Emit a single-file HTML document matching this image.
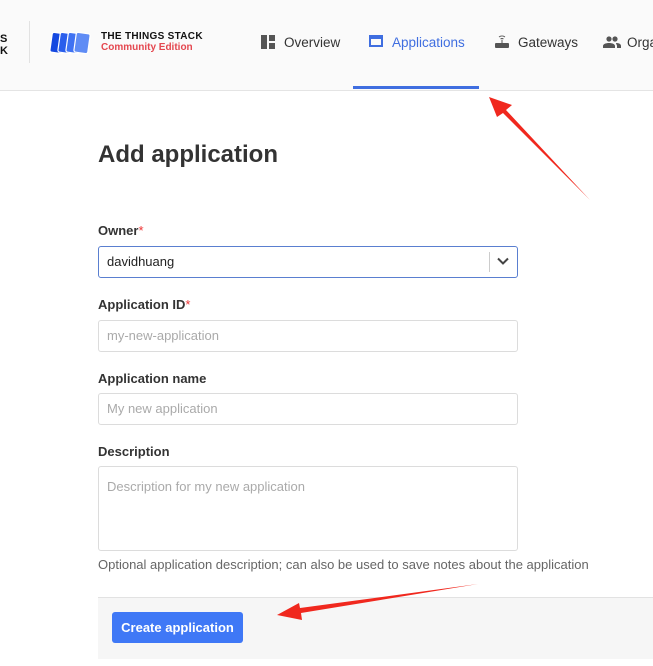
<!DOCTYPE html>
<html><head><meta charset="utf-8"><style>
body{margin:0;width:653px;height:666px;overflow:hidden;background:#fff;font-family:"Liberation Sans",sans-serif;position:relative;color:#222}
.a{position:absolute}
.hdr{left:0;top:0;width:653px;height:90px;background:#fafafa;border-bottom:1px solid #e4e4e4}
.nav{font-size:13.5px;color:#333;top:35px}
label{position:absolute;font-size:13px;font-weight:bold;color:#333}
.req{color:#e33;font-weight:normal}
.in{position:absolute;left:98px;width:420px;border:1px solid #dcdcdc;border-radius:3px;background:#fff;font-size:13px;color:#aaa;box-sizing:border-box;padding-left:8px}
</style></head><body>
<div class="a hdr"></div>
<div class="a" style="left:0;top:33px;font-weight:bold;font-size:11px;line-height:12px;color:#111">S<br>K</div>
<div class="a" style="left:29px;top:21px;width:1px;height:42px;background:#e2e2e2"></div>
<svg class="a" style="left:47px;top:30px" width="48" height="27">
<g stroke="#fff" stroke-width="1.2">
<rect x="4" y="3" width="14" height="20" rx="2" fill="#1448e0" transform="rotate(8 11 13)"/>
<rect x="12" y="3" width="14" height="20" rx="2" fill="#2a5eec" transform="rotate(8 19 13)"/>
<rect x="20" y="3" width="14" height="20" rx="2" fill="#3f72f2" transform="rotate(8 27 13)"/>
<rect x="28" y="3" width="14" height="20" rx="2" fill="#5f8cf5" transform="rotate(8 35 13)"/>
</g>
</svg>
<div class="a" style="left:101px;top:31px;font-size:10px;font-weight:bold;color:#111;letter-spacing:.3px">THE THINGS STACK</div>
<div class="a" style="left:101px;top:42px;font-size:10px;color:#e4474f;font-weight:bold">Community Edition</div>
<svg class="a" style="left:261px;top:35px" width="14" height="14"><rect x="0" y="0" width="6" height="14" fill="#555"/><rect x="8" y="0" width="6" height="6" fill="#555"/><rect x="8" y="8" width="6" height="6" fill="#555"/></svg>
<div class="a nav" style="left:284px">Overview</div>
<svg class="a" style="left:369px;top:35px" width="15" height="13"><rect x="1" y="1" width="12" height="10" fill="none" stroke="#3f6ee0" stroke-width="2"/><rect x="1" y="1" width="12" height="3" fill="#3f6ee0"/></svg>
<div class="a nav" style="left:392px;color:#3f6ee0">Applications</div>
<div class="a" style="left:353px;top:86px;width:126px;height:3px;background:#3f6ee0"></div>
<svg class="a" style="left:495px;top:34px" width="14" height="15"><path d="M4 3a5 5 0 0 1 6 0M5.5 5a3 3 0 0 1 3 0" stroke="#555" fill="none"/><rect x="6.5" y="6" width="1" height="3" fill="#555"/><rect x="0" y="9" width="14" height="5" rx="1" fill="#555"/></svg>
<div class="a nav" style="left:518px">Gateways</div>
<svg class="a" style="left:603px;top:36px" width="18" height="12"><circle cx="6" cy="3" r="2.6" fill="#555"/><circle cx="12" cy="3" r="2.6" fill="#555"/><path d="M0 12v-2c0-2 3-3 6-3s6 1 6 3v2zM13 7c3 0 5 1 5 3v2h-4v-2c0-1-1-2-1-3z" fill="#555"/></svg>
<div class="a nav" style="left:627px">Orga</div>

<div class="a" style="left:98px;top:141px;font-size:24px;font-weight:bold;color:#333">Add application</div>
<label style="left:98px;top:223px">Owner<span class="req">*</span></label>
<div class="in" style="top:246px;height:32px;border-color:#5a7fd0;color:#222;line-height:30px">davidhuang</div>
<div class="a" style="left:489px;top:252px;width:1px;height:20px;background:#ccc"></div>
<svg class="a" style="left:497px;top:257px" width="12" height="9"><path d="M1 1.5l5 5 5-5" stroke="#444" stroke-width="2" fill="none"/></svg>
<label style="left:98px;top:297px">Application ID<span class="req">*</span></label>
<div class="in" style="top:320px;height:32px;line-height:30px">my-new-application</div>
<label style="left:98px;top:371px">Application name</label>
<div class="in" style="top:393px;height:32px;line-height:30px">My new application</div>
<label style="left:98px;top:444px">Description</label>
<div class="in" style="top:466px;height:85px;padding-top:12px">Description for my new application</div>
<div class="a" style="left:98px;top:557px;font-size:13px;color:#666">Optional application description; can also be used to save notes about the application</div>
<div class="a" style="left:98px;top:597px;width:555px;height:61px;background:#f6f6f6;border-top:1px solid #e2e2e2"></div>
<div class="a" style="left:112px;top:612px;width:131px;height:31px;background:#3f78f6;border-radius:3px;color:#fff;font-size:13px;font-weight:bold;text-align:center;line-height:31px">Create application</div>

<svg class="a" style="left:0;top:0" width="653" height="666">
<path d="M590 200L506 110L512 105L489 97L497 117L503 113Z" fill="#f0281e"/>
<path d="M478 584L300 608L299 603L277 615L302 620L301 613Z" fill="#f0281e"/>
</svg>
</body></html>
